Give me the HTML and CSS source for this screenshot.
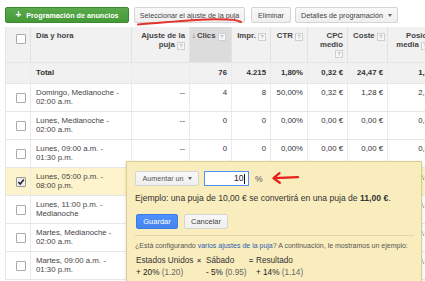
FILE: index.html
```html
<!DOCTYPE html>
<html lang="es">
<head>
<meta charset="utf-8">
<title>Programación de anuncios</title>
<link rel="stylesheet" href="styles.css">
</head>
<body>
<div class="page">
  <div class="toolbar">
    <div class="btn btn-green"><span class="plus">+</span>Programación de anuncios</div>
    <div class="btn btn-select">Seleccionar el ajuste de la puja</div>
    <div class="btn btn-delete">Eliminar</div>
    <div class="btn btn-details">Detalles de programación<span class="caret"></span></div>
    <svg class="mark-underline" width="110" height="10" viewBox="0 0 110 10"><path d="M2 8.5 C 30 6.5, 60 3, 80 3.2 S 100 4.2 105 6" /></svg>
  </div>

  <div class="grid">
    <div class="row head">
      <div class="cell chk"><span class="cb"></span></div>
      <div class="cell left">Día y hora</div>
      <div class="cell">Ajuste de la<br>puja <span class="help">?</span></div>
      <div class="cell sorted left"><span class="arrow">↓</span>Clics <span class="help">?</span></div>
      <div class="cell">Impr. <span class="help">?</span></div>
      <div class="cell">CTR <span class="help">?</span></div>
      <div class="cell">CPC<br>medio<br><span class="help">?</span></div>
      <div class="cell">Coste <span class="help">?</span></div>
      <div class="cell">Posic.<br>media <span class="help">?</span></div>
    </div>
    <div class="row total">
      <div class="cell chk"></div>
      <div class="cell left">Total</div>
      <div class="cell"></div>
      <div class="cell">76</div>
      <div class="cell">4.215</div>
      <div class="cell">1,80%</div>
      <div class="cell">0,32 €</div>
      <div class="cell">24,47 €</div>
      <div class="cell">1,8</div>
    </div>
    <div class="row">
      <div class="cell chk"><span class="cb"></span></div>
      <div class="cell left date">Domingo, Medianoche -<br>02:00 a.m.</div>
      <div class="cell">--</div>
      <div class="cell">4</div>
      <div class="cell">8</div>
      <div class="cell">50,00%</div>
      <div class="cell">0,32 €</div>
      <div class="cell">1,28 €</div>
      <div class="cell">2,1</div>
    </div>
    <div class="row">
      <div class="cell chk"><span class="cb"></span></div>
      <div class="cell left date">Lunes, Medianoche -<br>02:00 a.m.</div>
      <div class="cell">--</div>
      <div class="cell">0</div>
      <div class="cell">0</div>
      <div class="cell">0,00%</div>
      <div class="cell">0,00 €</div>
      <div class="cell">0,00 €</div>
      <div class="cell">0,0</div>
    </div>
    <div class="row">
      <div class="cell chk"><span class="cb"></span></div>
      <div class="cell left date">Lunes, 09:00 a.m. -<br>01:30 p.m.</div>
      <div class="cell">--</div>
      <div class="cell">0</div>
      <div class="cell">0</div>
      <div class="cell">0,00%</div>
      <div class="cell">0,00 €</div>
      <div class="cell">0,00 €</div>
      <div class="cell">0,0</div>
    </div>
    <div class="row selected">
      <div class="cell chk"><span class="cb on"><svg width="8" height="8" viewBox="0 0 8 8"><path d="M1.3 4 L3.2 6 L6.8 1.5" /></svg></span></div>
      <div class="cell left date">Lunes, 05:00 p.m. -<br>08:00 p.m.</div>
      <div class="cell">--</div>
      <div class="cell">0</div>
      <div class="cell">0</div>
      <div class="cell">0,00%</div>
      <div class="cell">0,00 €</div>
      <div class="cell">0,00 €</div>
      <div class="cell">0,0</div>
    </div>
    <div class="row">
      <div class="cell chk"><span class="cb"></span></div>
      <div class="cell left date">Lunes, 11:00 p.m. -<br>Medianoche</div>
      <div class="cell">--</div>
      <div class="cell">0</div>
      <div class="cell">0</div>
      <div class="cell">0,00%</div>
      <div class="cell">0,00 €</div>
      <div class="cell">0,00 €</div>
      <div class="cell">0,0</div>
    </div>
    <div class="row">
      <div class="cell chk"><span class="cb"></span></div>
      <div class="cell left date">Martes, Medianoche -<br>02:00 a.m.</div>
      <div class="cell">--</div>
      <div class="cell">0</div>
      <div class="cell">0</div>
      <div class="cell">0,00%</div>
      <div class="cell">0,00 €</div>
      <div class="cell">0,00 €</div>
      <div class="cell">0,0</div>
    </div>
    <div class="row">
      <div class="cell chk"><span class="cb"></span></div>
      <div class="cell left date">Martes, 09:00 a.m. -<br>01:30 p.m.</div>
      <div class="cell">--</div>
      <div class="cell">0</div>
      <div class="cell">0</div>
      <div class="cell">0,00%</div>
      <div class="cell">0,00 €</div>
      <div class="cell">0,00 €</div>
      <div class="cell">0,0</div>
    </div>
  </div>

  <div class="popup">
    <div class="pop-row">
      <div class="btn btn-mode">Aumentar un<span class="caret"></span></div>
      <div class="field">10<span class="cursor"></span></div>
      <span class="pct">%</span>
      <svg class="mark-arrow" width="32" height="16" viewBox="0 0 32 16"><path d="M3.5 8.2 L28 7.2 M9.5 3.2 L3.5 8.2 L9.8 12.8" /></svg>
    </div>
    <p class="example">Ejemplo: una puja de 10,00 € se convertirá en una puja de <b>11,00 €</b>.</p>
    <div class="actions">
      <div class="btn btn-save">Guardar</div>
      <div class="btn btn-cancel">Cancelar</div>
    </div>
    <div class="sep"></div>
    <p class="hint">¿Está configurando <a class="link">varios ajustes de la puja</a>? A continuación, le mostramos un ejemplo:</p>
    <div class="calc">
      <span class="c1">Estados Unidos</span><span class="op">×</span><span>Sábado</span><span class="op">=</span><span>Resultado</span>
      <span class="span2"><span class="v">+ 20%</span> <span class="m">(1.20)</span></span>
      <span class="span2"><span class="v">- 5%</span> <span class="m">(0.95)</span></span>
      <span><span class="v">+ 14%</span> <span class="m">(1.14)</span></span>
    </div>
  </div>
</div>
</body>
</html>
```

FILE: styles.css
```css
html, body {
  margin: 0;
  padding: 0;
  overflow: hidden;
}
body {
  width: 425px;
  height: 281px;
  background: #fff;
  font-family: "Liberation Sans", Arial, sans-serif;
  color: #333;
}
.page {
  position: relative;
  padding: 7px 0 0 5px;
  height: 274px;
}

/* toolbar */
.toolbar {
  position: relative;
  display: flex;
  height: 16px;
}
.btn {
  box-sizing: border-box;
  height: 16px;
  display: flex;
  align-items: center;
  justify-content: center;
  border: 1px solid #d4d4d4;
  border-radius: 2px;
  background: linear-gradient(#f8f8f8, #efefef);
  font-size: 7.2px;
  color: #444;
  white-space: nowrap;
}
.btn-green {
  width: 124px;
  background: linear-gradient(#5aa94c, #449a37);
  border-color: #3a8a2e;
  color: #fff;
  font-weight: bold;
}
.plus {
  font-size: 10px;
  margin-right: 5px;
  line-height: 1;
}
.btn-select { width: 111px; margin-left: 5px; }
.btn-delete { width: 40px; margin-left: 6px; }
.btn-details { width: 103px; margin-left: 4px; }
.caret {
  display: inline-block;
  margin-left: 5px;
  border-left: 2.5px solid transparent;
  border-right: 2.5px solid transparent;
  border-top: 3px solid #666;
}
.mark-underline {
  position: absolute;
  left: 131px;
  top: 9px;
  overflow: visible;
}
.mark-underline path {
  fill: none;
  stroke: #e5322d;
  stroke-width: 2;
  stroke-linecap: round;
}

/* grid */
.grid {
  margin-top: 4px;
  width: 433px;
  font-size: 7.8px;
  line-height: 8.5px;
}
.row {
  display: grid;
  grid-template-columns: 26px 101px 58px 42px 39px 37px 40px 40px 46px;
  height: 28px;
  box-sizing: border-box;
  border-bottom: 1px solid #e6e6e6;
  background: #fff;
}
.cell {
  box-sizing: border-box;
  padding: 5px 4px 0 5px;
  border-right: 1px solid #ebebeb;
  text-align: right;
  white-space: nowrap;
  color: #333;
}
.cell.left { text-align: left; }
.cell.chk { padding: 9px 0 0 10px; border-left: 1px solid #e6e6e6; }
.row.head {
  height: 36px;
  background: #f1f1f1;
  border-bottom-color: #e4e4e4;
}
.row.head .cell {
  font-weight: bold;
  color: #444;
  border-right-color: #e2e2e2;
}
.row.head .cell.chk { padding-top: 7px; }
.row.head .cell.sorted {
  background: #dcdcdc;
  padding-left: 2px;
}
.arrow { font-weight: bold; margin-right: 1px; }
.row.total {
  height: 21px;
  background: #f1f1f1;
}
.row.total .cell {
  font-weight: bold;
  padding-top: 6px;
  color: #333;
}
.row.selected { background: #fdf3cc; }
.date { color: #444; }
.help {
  display: inline-block;
  box-sizing: border-box;
  width: 8px;
  height: 8px;
  border: 1px solid #cfcfcf;
  background: #f7f7f7;
  color: #999;
  font-size: 5.5px;
  line-height: 6px;
  text-align: center;
  font-weight: normal;
  vertical-align: -1px;
}
.cb {
  display: block;
  box-sizing: border-box;
  width: 10px;
  height: 10px;
  border: 1px solid #a9a9a9;
  border-radius: 1px;
  background: #fff;
}
.cb.on { background: #eeeeee; border-color: #999; }
.cb svg { display: block; }
.cb path {
  fill: none;
  stroke: #222;
  stroke-width: 1.5;
}

/* popup */
.popup {
  position: absolute;
  left: 126px;
  top: 161px;
  width: 296px;
  height: 130px;
  box-sizing: border-box;
  padding: 9px 7px 0 8px;
  background: #f9edbe;
  border: 1px solid #dccd92;
  box-shadow: 0 1px 3px rgba(0, 0, 0, 0.15);
}
.pop-row {
  position: relative;
  display: flex;
  align-items: center;
  height: 15px;
}
.btn-mode {
  width: 64px;
  height: 15px;
  font-size: 7.2px;
  color: #555;
}
.btn-mode .caret { margin-left: 4px; }
.field {
  box-sizing: border-box;
  width: 45px;
  height: 15px;
  margin-left: 5px;
  border: 1px solid #4d90fe;
  background: #fff;
  font-size: 8.6px;
  line-height: 13px;
  padding-right: 3px;
  color: #222;
  display: flex;
  justify-content: flex-end;
  align-items: center;
}
.cursor {
  display: inline-block;
  width: 1px;
  height: 10px;
  background: #111;
  margin-left: 0.5px;
}
.pct {
  margin-left: 6px;
  font-size: 8.6px;
  color: #555;
}
.mark-arrow {
  position: absolute;
  left: 135px;
  top: -1px;
  overflow: visible;
}
.mark-arrow path {
  fill: none;
  stroke: #e5221c;
  stroke-width: 2.3;
  stroke-linecap: round;
  stroke-linejoin: round;
}
.example {
  margin: 7px 0 0;
  font-size: 8.6px;
  line-height: 10px;
  color: #333;
  white-space: nowrap;
}
.actions {
  display: flex;
  margin-top: 11px;
  padding-left: 1px;
}
.btn-save {
  width: 42px;
  height: 15px;
  background: linear-gradient(#4d90fe, #4684ea);
  border-color: #3a7be6;
  color: #fff;
  font-size: 7.5px;
}
.btn-cancel {
  width: 44px;
  height: 15px;
  margin-left: 6px;
  font-size: 7.5px;
  color: #444;
}
.sep {
  margin-top: 6px;
  height: 1px;
  background: #e2d6a5;
}
.hint {
  margin: 5px 0 0;
  font-size: 7px;
  line-height: 9px;
  color: #555;
  white-space: nowrap;
}
.link { color: #2a5db0; }
.calc {
  display: grid;
  grid-template-columns: 61px 9px 43px 7px 60px;
  grid-auto-rows: 12px;
  margin-top: 5px;
  font-size: 8.2px;
  line-height: 12px;
  color: #333;
  padding-left: 1px;
  white-space: nowrap;
}
.calc .op { font-size: 7px; font-weight: bold; color: #444; }
.calc .span2 { grid-column: span 2; }
.calc .v { color: #222; }
.calc .m { color: #666; }
```
